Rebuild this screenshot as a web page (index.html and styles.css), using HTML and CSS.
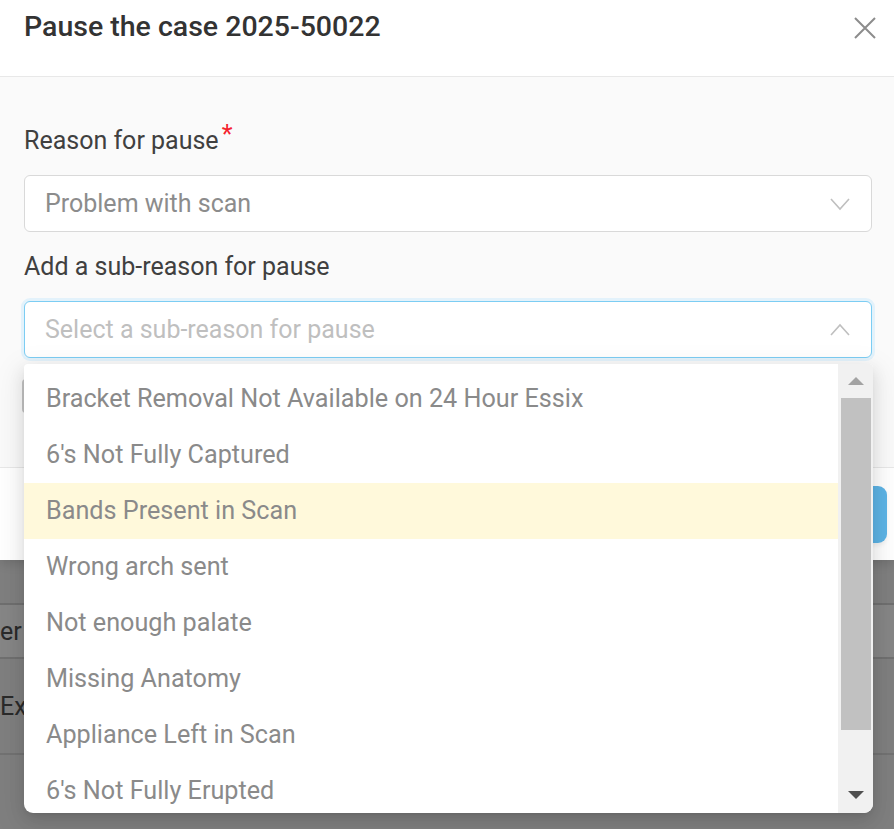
FILE: index.html
```html
<!DOCTYPE html>
<html lang="en">
<head>
<meta charset="utf-8">
<title>Pause the case</title>
<link rel="stylesheet" href="styles.css">
</head>
<body>
<div class="modal">
  <div class="modal-header">
    <h1 class="modal-title">Pause the case 2025-50022</h1>
    <span class="close-btn" aria-label="Close">
      <svg width="22" height="22" viewBox="0 0 22 22"><path d="M1 1 L21 21 M21 1 L1 21" stroke="#8c8c8c" stroke-width="2" fill="none"/></svg>
    </span>
  </div>
  <div class="modal-body">
    <div class="form-label">Reason for pause<span class="req">*</span></div>
    <div class="select">
      <span class="select-value">Problem with scan</span>
      <svg class="chev" width="20" height="14" viewBox="0 0 20 14"><path d="M1 2 L10 12 L19 2" stroke="#bfbfbf" stroke-width="1.6" fill="none"/></svg>
    </div>
    <div class="form-label second">Add a sub-reason for pause</div>
    <div class="select focused">
      <span class="select-placeholder">Select a sub-reason for pause</span>
      <svg class="chev" width="20" height="14" viewBox="0 0 20 14"><path d="M1 12 L10 2 L19 12" stroke="#bfbfbf" stroke-width="1.6" fill="none"/></svg>
    </div>
    <div class="third-field"></div>
  </div>
  <div class="modal-footer">
    <button class="btn-primary">Pause</button>
  </div>
</div>

<div class="backdrop-table">
  <div class="bt-row bt-head"><span class="bt-cell">er ID</span></div>
  <div class="bt-row bt-body"><span class="bt-cell">Exp</span></div>
  <div class="bt-row bt-body2"></div>
</div>

<div class="dropdown">
  <ul class="dd-list">
    <li class="dd-item">Bracket Removal Not Available on 24 Hour Essix</li>
    <li class="dd-item">6's Not Fully Captured</li>
    <li class="dd-item active">Bands Present in Scan</li>
    <li class="dd-item">Wrong arch sent</li>
    <li class="dd-item">Not enough palate</li>
    <li class="dd-item">Missing Anatomy</li>
    <li class="dd-item">Appliance Left in Scan</li>
    <li class="dd-item">6's Not Fully Erupted</li>
  </ul>
  <div class="scrollbar">
    <div class="sb-btn up"><span class="tri-up"></span></div>
    <div class="sb-thumb"></div>
    <div class="sb-rest"><span class="tri-down"></span></div>
  </div>
</div>
</body>
</html>
```

FILE: styles.css
```css
* { box-sizing: border-box; }

html, body {
  margin: 0;
  padding: 0;
}

body {
  width: 894px;
  height: 829px;
  overflow: hidden;
  background: #7f7f7f;
  font-family: Roboto, "Liberation Sans", Arial, sans-serif;
  position: relative;
}

.modal {
  background: #ffffff;
  width: 894px;
  box-shadow: 0 4px 10px rgba(0, 0, 0, 0.12);
}

.modal-header {
  height: 77px;
  border-bottom: 1px solid #e8e8e8;
  display: flex;
  align-items: flex-start;
  justify-content: space-between;
  padding: 0 18px 0 24px;
}

.modal-title {
  margin: 0;
  padding-top: 8px;
  font-size: 28.5px;
  line-height: 38px;
  font-weight: 500;
  color: #333333;
}

.close-btn {
  display: block;
  margin-top: 17px;
  width: 22px;
  height: 22px;
}

.close-btn svg { display: block; }

.modal-body {
  background: #fafafa;
  height: 390px;
  padding: 48px 22px 0 24px;
}

.form-label {
  font-size: 25px;
  line-height: 32px;
  color: #404040;
  margin-bottom: 18px;
}

.form-label.second {
  margin-top: 19px;
}

.req {
  color: #f5222d;
  font-size: 25px;
  margin-left: 3px;
  vertical-align: 6px;
  line-height: 0;
}

.select {
  height: 57px;
  background: #ffffff;
  border: 1px solid #d9d9d9;
  border-radius: 6px;
  display: flex;
  align-items: center;
  justify-content: space-between;
  padding: 0 21px 0 20px;
  font-size: 25px;
}

.select.focused {
  border-color: #7ccdf3;
  box-shadow: 0 0 0 3px #e3f2fb;
}

.select-value { color: #8c8c8c; }
.select-placeholder { color: #bfbfbf; }

.chev { display: block; }

.third-field {
  margin-top: 21px;
  margin-left: -2px;
  width: 30px;
  height: 34px;
  border: 2px solid #c4c4c4;
  border-radius: 4px;
  background: #ffffff;
}

.modal-footer {
  height: 93px;
  border-top: 1px solid #e8e8e8;
  display: flex;
  justify-content: flex-end;
  align-items: flex-start;
  padding: 18px 7px 0 0;
}

.btn-primary {
  width: 160px;
  height: 57px;
  border: none;
  border-radius: 9px;
  background: #5db4e6;
  color: #ffffff;
  font-family: inherit;
  font-size: 25px;
  box-shadow: 0 3px 4px rgba(0, 0, 0, 0.06);
}

.backdrop-table {
  margin-top: 43px;
}

.bt-row {
  border-top: 2px solid #6f6f6f;
  display: flex;
  align-items: center;
  font-size: 25px;
  color: #2a2a2a;
}

.bt-head {
  height: 56px;
  background: #868686;
  border-bottom: 2px solid #707070;
}

.bt-body {
  height: 96px;
  border-top: none;
  border-bottom: 2px solid #727272;
  padding-bottom: 0;
}

.bt-cell {
  white-space: nowrap;
  margin-left: 0;
}

.bt-body2 { height: 80px; border-top: none; }

/* dropdown overlay */
.dropdown {
  position: absolute;
  left: 24px;
  top: 364px;
  width: 849px;
  height: 449px;
  background: #ffffff;
  border-radius: 4px 4px 9px 9px;
  overflow: hidden;
  display: flex;
  box-shadow: 0 6px 16px rgba(0, 0, 0, 0.10), 0 3px 6px -4px rgba(0, 0, 0, 0.14), 0 9px 28px 8px rgba(0, 0, 0, 0.06);
}

.dd-list {
  flex: 1;
  list-style: none;
  margin: 0;
  padding: 7px 0 0 0;
  overflow: hidden;
}

.dd-item {
  height: 56px;
  line-height: 56px;
  padding-left: 22px;
  font-size: 25.2px;
  color: #8a8a8a;
  white-space: nowrap;
}

.dd-item.active {
  background: #fff9db;
}

.scrollbar {
  width: 35px;
  background: #f1f1f1;
  display: flex;
  flex-direction: column;
  padding: 0 2px 0 3px;
}

.sb-btn.up {
  height: 34px;
  display: flex;
  justify-content: center;
  align-items: center;
}

.tri-up {
  width: 0;
  height: 0;
  border-left: 8px solid transparent;
  border-right: 8px solid transparent;
  border-bottom: 8px solid #a3a3a3;
}

.sb-thumb {
  height: 332px;
  background: #c1c1c1;
}

.sb-rest {
  flex: 1;
  display: flex;
  justify-content: center;
  align-items: flex-end;
  padding-bottom: 14px;
}

.tri-down {
  width: 0;
  height: 0;
  border-left: 8px solid transparent;
  border-right: 8px solid transparent;
  border-top: 8px solid #505050;
}
```
